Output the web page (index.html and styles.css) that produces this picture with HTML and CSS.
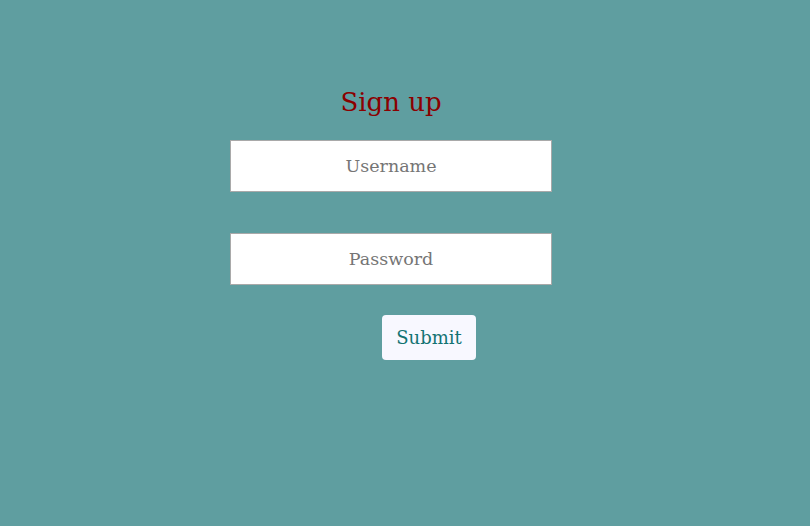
FILE: index.html
```html
<!DOCTYPE html>
<html>
<head>
<meta charset="utf-8">
<link rel="stylesheet" href="styles.css">
</head>
<body>
<div class="signup">
  <h1 class="title">Sign up</h1>
  <input class="field" type="text" placeholder="Username">
  <input class="field field-second" type="password" placeholder="Password">
  <button class="submit">Submit</button>
</div>
</body>
</html>
```
FILE: styles.css
```css
html, body {
  margin: 0;
  padding: 0;
  background: #5f9ea0;
  height: 100%;
}
body {
  font-family: "DejaVu Serif", Georgia, serif;
}
.signup {
  width: 322px;
  margin-left: 230px;
  padding-top: 82px;
  display: flex;
  flex-direction: column;
}
.title {
  margin: 0;
  font-weight: normal;
  font-size: 26px;
  line-height: 40px;
  color: #8b0000;
  text-align: center;
  height: 58px;
}
.field {
  box-sizing: border-box;
  width: 322px;
  height: 52px;
  border: 1px solid #a9a9a9;
  background: #fff;
  font-family: "DejaVu Serif", Georgia, serif;
  font-size: 17.5px;
  text-align: center;
  padding: 0;
  margin: 0;
  outline: none;
}
.field::placeholder {
  color: #757575;
}
.field-second {
  margin-top: 41px;
}
.submit {
  align-self: flex-start;
  margin-left: 152px;
  margin-top: 30px;
  width: 94px;
  height: 45px;
  border: none;
  border-radius: 4px;
  background: #f8f8ff;
  color: #137373;
  font-family: "DejaVu Serif", Georgia, serif;
  font-size: 18px;
  padding: 0;
}
```
